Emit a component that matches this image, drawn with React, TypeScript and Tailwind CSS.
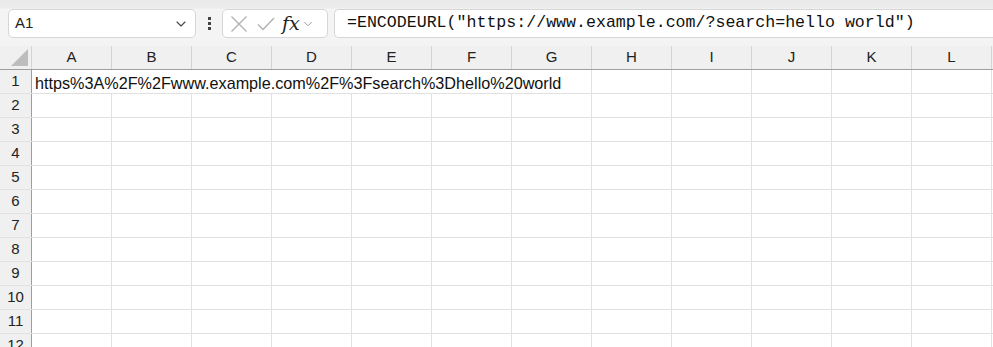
import { ChevronDown } from "lucide-react";

const cols = ["A", "B", "C", "D", "E", "F", "G", "H", "I", "J", "K", "L"];
const rows = [1, 2, 3, 4, 5, 6, 7, 8, 9, 10, 11, 12];

const formula = '=ENCODEURL("https://www.example.com/?search=hello world")';
const result = "https%3A%2F%2Fwww.example.com%2F%3Fsearch%3Dhello%20world";

const Toolbar = () => {
  return (
    <div className="flex h-[46px] items-start pt-[9px] bg-[linear-gradient(to_bottom,#e9e9e9_0px,#ececec_8px,#f4f4f4_9px,#f4f4f4_100%)]">
      <div className="ml-[8px] flex h-[29px] w-[188px] items-center justify-between rounded-[5px] border border-[#d6d6d6] bg-white pl-[6px] pr-[6px]">
        <span className="text-[15px] text-[#222]">A1</span>
        <ChevronDown className="h-[16px] w-[16px] text-[#444]" strokeWidth={1.6} />
      </div>
      <div className="flex h-[29px] w-[26px] flex-col items-center justify-center gap-[2px]">
        <span className="h-[3px] w-[3px] bg-[#444]" />
        <span className="h-[3px] w-[3px] bg-[#444]" />
        <span className="h-[3px] w-[3px] bg-[#444]" />
      </div>
      <div className="flex h-[29px] w-[106px] items-center rounded-[5px] border border-[#d6d6d6] bg-white pl-[6px]">
        <svg width="20" height="20" viewBox="0 0 20 20" className="text-[#b0b0b0]">
          <path d="M2.5 2.5L17.5 17.5M17.5 2.5L2.5 17.5" stroke="currentColor" strokeWidth="1.3" fill="none" />
        </svg>
        <svg width="20" height="18" viewBox="0 0 20 18" className="ml-[7px] text-[#b0b0b0]">
          <path d="M2 9.5L7 14.5L18 3" stroke="currentColor" strokeWidth="1.3" fill="none" />
        </svg>
        <span className="ml-[6px] font-['DejaVu_Serif',serif] text-[19px] italic leading-none text-[#222]">
          fx
        </span>
        <ChevronDown className="ml-[1px] h-[14px] w-[14px] text-[#888]" strokeWidth={1.4} />
      </div>
      <div className="ml-[6px] flex h-[29px] flex-1 items-center rounded-l-[5px] border border-r-0 border-[#d6d6d6] bg-white pl-[12px]">
        <span className="whitespace-pre font-['Liberation_Mono',monospace] text-[16.6px] text-[#111]">
          {formula}
        </span>
      </div>
    </div>
  );
};

const HeaderRow = () => {
  return (
    <div className="flex h-[24px] border-b border-[#9e9e9e] bg-[#f0f0f0]">
      <div className="relative w-[32px] shrink-0 border-r border-[#d4d4d4]">
        <svg width="17" height="17" viewBox="0 0 17 17" className="absolute bottom-[3px] right-[3px]">
          <path d="M17 0L17 17L0 17Z" fill="#bdbdbd" />
        </svg>
      </div>
      {cols.map((c) => (
        <div
          key={c}
          className="flex w-[80px] shrink-0 items-center justify-center border-r border-[#d4d4d4] text-[15px] text-[#222]"
        >
          {c}
        </div>
      ))}
      <div className="flex-1" />
    </div>
  );
};

const Row = ({ n }: { n: number }) => {
  return (
    <div className="flex h-[24px] border-b border-[#e1e1e1]">
      <div className="flex w-[32px] shrink-0 items-center justify-center border-r border-[#9e9e9e] bg-[#f0f0f0] text-[15px] text-[#222]">
        {n}
      </div>
      {cols.map((c) => (
        <div key={c} className="relative w-[80px] shrink-0 border-r border-[#e1e1e1]">
          {n === 1 && c === "A" && (
            <span className="absolute left-0 top-0 z-10 h-[23px] w-[559px] whitespace-nowrap bg-white pl-[3px] pt-[1px] text-[16.2px] text-[#111]">
              {result}
            </span>
          )}
        </div>
      ))}
      <div className="flex-1" />
    </div>
  );
};

export default function App() {
  return (
    <div className="h-[347px] w-[993px] overflow-hidden bg-white font-['Liberation_Sans',Arial,sans-serif]">
      <Toolbar />
      <HeaderRow />
      {rows.map((n) => (
        <Row key={n} n={n} />
      ))}
    </div>
  );
}
